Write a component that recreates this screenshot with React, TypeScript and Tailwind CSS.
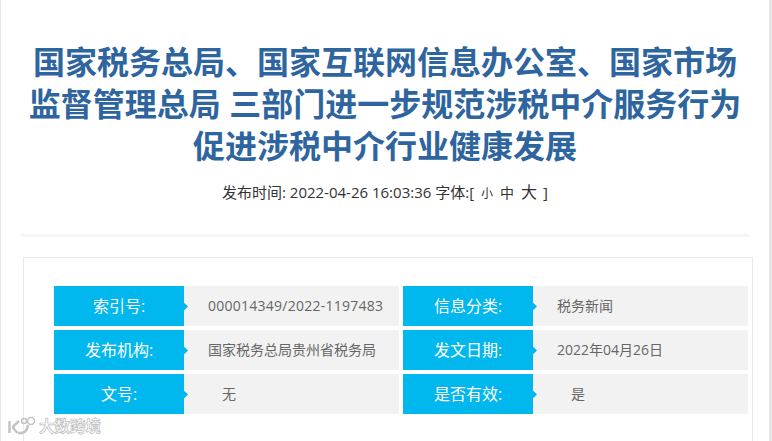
const FONT = "font-['Open_Sans','Noto_Sans_CJK_SC',sans-serif]";

const ROWS = [
  [
    { label: '索引号:', value: '000014349/2022-1197483', wide: true },
    { label: '信息分类:', value: '税务新闻' },
  ],
  [
    { label: '发布机构:', value: '国家税务总局贵州省税务局' },
    { label: '发文日期:', value: '2022年04月26日' },
  ],
  [
    { label: '文号:', value: '无', indent: true },
    { label: '是否有效:', value: '是', indent: true },
  ],
];

function MetaCell({ label, value, indent, wide }: { label: string; value: string; indent?: boolean; wide?: boolean }) {
  return (
    <div className="flex h-10 bg-[#f2f2f2]">
      <div className="relative flex w-[130px] shrink-0 items-center justify-center bg-[#00b7ee] text-base text-white">
        {label}
        <span className="absolute right-[-2.5px] top-[17.5px] h-[5px] w-[5px] rotate-45 bg-[#00b7ee]" />
      </div>
      <div className={`flex items-center text-sm text-[#666] ${indent ? 'pl-[38px]' : 'pl-6'} ${wide ? 'tracking-[0.25px]' : ''}`}>
        {value}
      </div>
    </div>
  );
}

export default function App() {
  return (
    <div className={`relative h-[441px] overflow-hidden border-l border-r-[3px] border-[#e6e6e6] bg-white ${FONT}`}>
      <div className="px-5 pt-[41px]">
        <h1 className="text-center text-[32px] font-bold leading-[42px] text-[#2e659f]">
          国家税务总局、国家互联网信息办公室、国家市场
          <br />
          监督管理总局 三部门进一步规范涉税中介服务行为
          <br />
          促进涉税中介行业健康发展
        </h1>
        <div className="mt-[13px] flex items-baseline justify-center text-[15px] leading-5 text-[#333]">
          <span>发布时间: 2022-04-26 16:03:36 字体:[</span>
          <span className="ml-[7px] text-xs">小</span>
          <span className="ml-[7px] text-sm">中</span>
          <span className="ml-[7px] text-base">大</span>
          <span className="ml-[6px]">]</span>
        </div>
        <div className="mt-[30px] h-[3px] bg-[#f5f5f5]" />
      </div>

      <div className="ml-[22px] mr-4 mt-5 border border-[#eaeaea] px-[30px] pb-10 pt-7">
        <div className="flex flex-col gap-1">
          {ROWS.map((row, i) => (
            <div key={i} className="grid grid-cols-[345px_345px] gap-1">
              {row.map((cell) => (
                <MetaCell key={cell.label} {...cell} />
              ))}
            </div>
          ))}
        </div>
      </div>

      <div className="absolute bottom-[5px] left-[6px] flex items-center gap-[2px]">
        <svg width="30" height="21" viewBox="0 0 30 21" fill="none" stroke="#c4c4c4" strokeWidth="2.5">
          <path d="M2.5 6v12M12 6 6.5 11q-1 1.5 .5 3l3.5 4" />
          <path d="M11 18q9 1 10-8" />
          <circle cx="17" cy="6" r="2.5" strokeWidth="1.5" />
          <circle cx="24" cy="6" r="3.5" strokeWidth="1.5" />
        </svg>
        <span className="text-[15.5px] font-bold leading-5 text-white [-webkit-text-stroke:0.7px_#bcbcbc]">大数跨境</span>
      </div>
    </div>
  );
}
